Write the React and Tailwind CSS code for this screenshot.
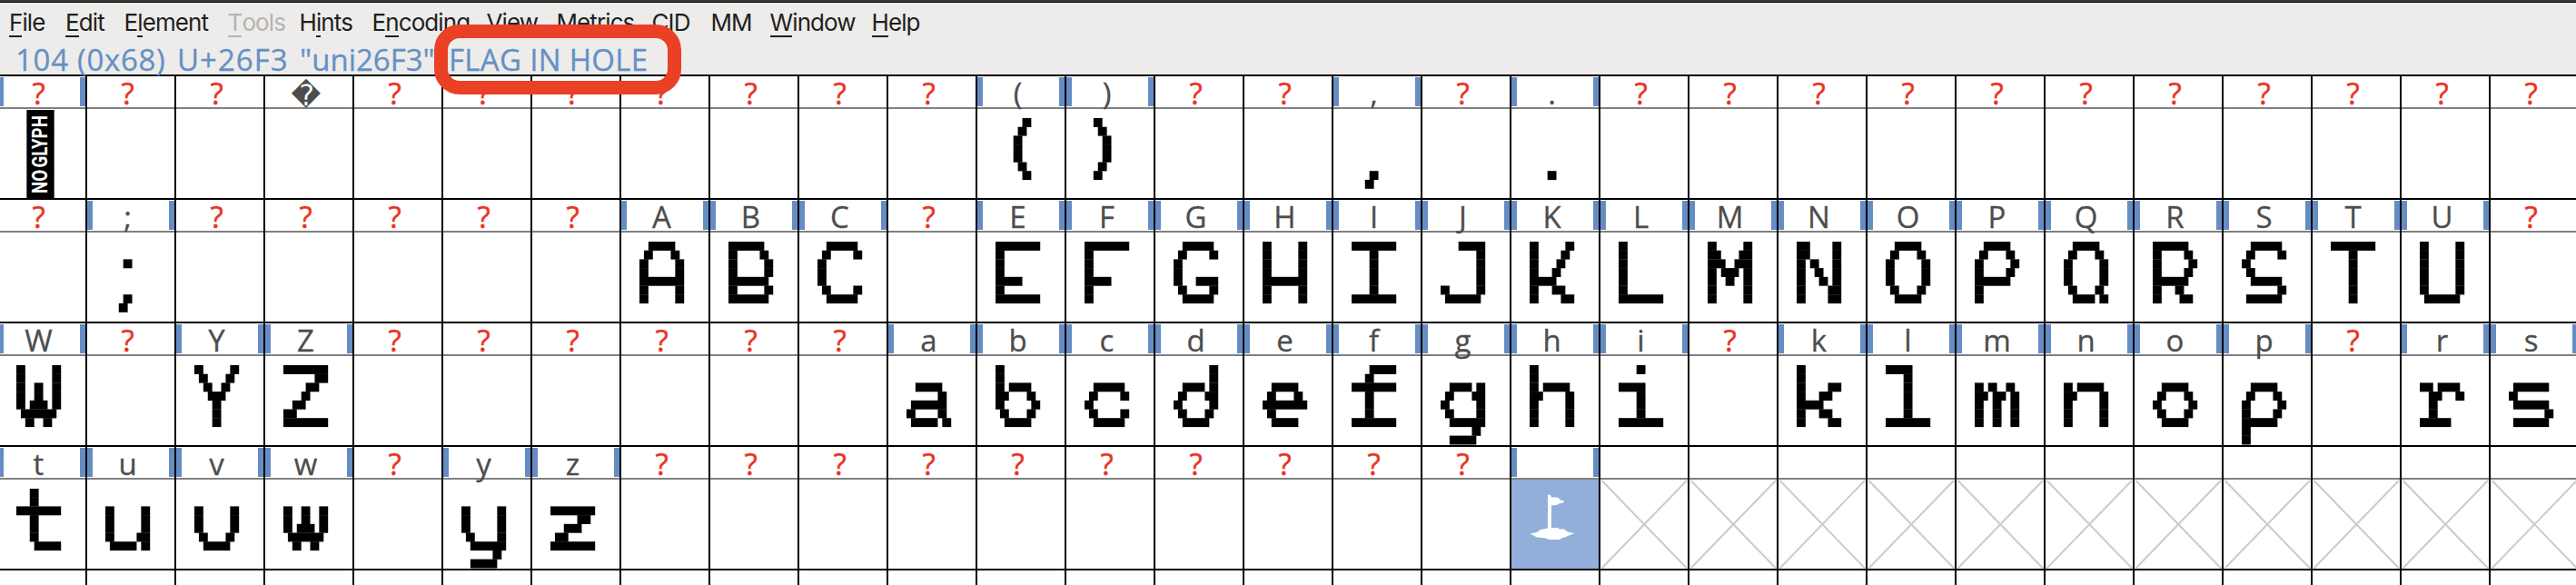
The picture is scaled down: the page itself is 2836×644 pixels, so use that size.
import React from "react";

const MENU = [
  { text: "File", w: "w-[62px]", key: 0 },
  { text: "Edit", w: "w-[64.5px]", key: 0 },
  { text: "Element", w: "w-[114px]", key: 1 },
  { text: "Tools", w: "w-[79px]", key: 0, off: true },
  { text: "Hints", w: "w-[80px]", key: 1 },
  { text: "Encoding", w: "w-[126px]", key: 1 },
  { text: "View", w: "w-[77px]", key: 0 },
  { text: "Metrics", w: "w-[105px]", key: 0 },
  { text: "CID", w: "w-[65px]", key: -1 },
  { text: "MM", w: "w-[65px]", key: -1 },
  { text: "Window", w: "w-[112px]", key: 0 },
  { text: "Help", w: "w-[80px]", key: 0 },
];

// Bitmaps: nine rows separated by "/", each a list of half-pixel runs
// (start and end column, "A" is column ten).
const BITMAPS = {
  "(": "68/57/46/46/46/57/68",
  ")": "24/35/46/46/46/35/24",
  ",": "//////46/35",
  ".": "//////46",
  ";": "//46////46/35",
  A: "28/13 79/02 8A/02 8A/0A/02 8A/02 8A",
  B: "08/02 79/02 8A/02 8A/09/02 8A/09",
  C: "29/13 8A/02/02/02/13 8A/29",
  E: "0A/02/02/02/06/02/0A",
  F: "0A/02/02/02/06/02/02",
  G: "29/13 8A/02/02/02 5A/13 8A/29",
  H: "02 8A/02 8A/02 8A/02 8A/0A/02 8A/02 8A",
  I: "0A/46/46/46/46/46/0A",
  J: "4A/8A/8A/8A/8A/02 8A/19",
  K: "02 8A/02 79/02 68/02 57/06/02 58/02 7A",
  L: "02/02/02/02/02/02/0A",
  M: "02 8A/03 7A/04 6A/02 37 8A/02 46 8A/02 8A/02 8A",
  N: "03 8A/03 8A/02 35 8A/02 46 8A/02 57 8A/02 7A/02 7A",
  O: "28/13 79/02 8A/02 8A/02 8A/13 79/28",
  P: "28/13 79/02 8A/02 79/08/02/02",
  Q: "28/13 79/02 8A/02 8A/02 8A/13 79/27 8A",
  R: "08/02 79/02 8A/02 79/08/02 57/02 69",
  S: "29/13 8A/02/13/29/8A/19",
  T: "0A/46/46/46/46/46/46",
  U: "02 8A/02 8A/02 8A/02 8A/02 8A/02 8A/19",
  W: "02 8A/02 8A/02 46 8A/02 46 8A/02 37 8A/19/24 68",
  Y: "02 8A/13 79/24 68/37/46/46/46",
  Z: "0A/7A/58/46/25/03/0A",
  a: "//28/79/19/02 79/17 8A",
  b: "02/02/02 38/03 79/02 8A/13 79/28",
  c: "//29/13 8A/02/13 8A/29",
  d: "8A/8A/27 8A/13 7A/02 8A/13 79/28",
  e: "//28/13 79/0A/13/28",
  f: "4A/35/0A/35/35/35/0A",
  g: "//27 8A/13 7A/02 8A/13 8A/2A/79/28",
  h: "02/02/02 39/03 8A/02 8A/02 8A/02 8A",
  i: "46//06/46/46/46/0A",
  k: "02/02/02 7A/02 58/06/02 58/02 7A",
  l: "06/46/46/46/46/46/0A",
  m: "//02 35 79/03 47 8A/02 46 8A/02 46 8A/02 46 8A",
  n: "//02 39/03 8A/02 8A/02 8A/02 8A",
  o: "//28/13 79/02 8A/13 79/28",
  p: "//28/13 79/02 8A/02 79/08/02/02",
  r: "//03 49/25 8A/24/24/07",
  s: "//19/02/19/8A/19",
  t: "35/35/0A/35/35/35/4A",
  u: "//02 8A/02 8A/02 8A/02 7A/17 8A",
  v: "//02 8A/02 8A/02 8A/13 79/28",
  w: "//02 46 8A/02 46 8A/02 37 8A/19/24 68",
  y: "//02 8A/02 8A/02 8A/13 8A/2A/79/28",
  z: "//0A/69/37/14/0A",
};

const ROWS = [
  "!??\uFFFD???????()??,?.???????????",
  "?;?????ABC?EFGHIJKLMNOPQRSTU?",
  "W?YZ??????abcdefghi?klmnop?rs",
  "tuvw?yz??????????#___________",
];

function Bitmap({ name }) {
  const rects = [];
  BITMAPS[name].split("/").forEach((row, y) => {
    row.split(" ").filter(Boolean).forEach((run) => {
      const a = parseInt(run[0], 16);
      const b = parseInt(run[1], 16);
      rects.push(
        <rect key={y + run} x={a * 4.92} y={y * 9.7} width={(b - a) * 4.92} height={9.9} />
      );
    });
  });
  return (
    <svg className="ml-[20.4px] mt-[10px] h-[88px] w-[50px] blur-[0.4px]" viewBox="0 0 50 88">
      {rects}
    </svg>
  );
}

function Flag() {
  return (
    <svg className="h-[98px] w-[96px] blur-[0.5px]" viewBox="0 0 96 98" fill="#fff">
      <path d="M40 16.5 L43 17 L44 19.5 L51 19.5 L54 22.5 L58 23.5 L57 25.5 L52 26.5 L50 28 L44 28.5 L44 53 L51 53 L53 54.5 L58 54.5 L62 57.5 L69.5 59.3 L63 61.5 L59 63.5 L56 64 L53 66 L41 66 L38 64.5 L28 63.5 L20.5 59.5 L28 58 L32 55 L40 53.5 Z" />
    </svg>
  );
}

function Cross() {
  return (
    <svg className="h-[98px] w-[96px]" viewBox="0 0 96 98" stroke="#cbcbcb" strokeWidth="2">
      <path d="M1.5 1 L95 97.500 M95 1 L1.5 97.500" />
    </svg>
  );
}

function Cell({ ch }) {
  const missing = ch === "?" || ch === "!";
  const barred = ch === "!" || ch === "#" || ch in BITMAPS;
  const label = missing ? "?" : ch === "#" || ch === "_" ? "" : ch;
  return (
    <div className="flex h-full w-[98px] shrink-0 flex-col border-r-2 border-black">
      <div className="flex h-9 items-start justify-between border-b-2 border-[#808080] pt-px">
        <span className={barred ? "h-8 w-1.5 bg-[#658dc3]" : "h-8 w-1.5"} />
        {ch === "\uFFFD" ? (
          <span className="h-8 -translate-x-[3px] font-['DejaVu_Sans'] text-[32px] leading-[40px] text-[#4d4d4d]">{label}</span>
        ) : (
          <span
            className={
              missing
                ? "h-8 -translate-x-[3.5px] font-['Open_Sans'] text-[33px] font-medium leading-[35px] text-[#ea3323] [-webkit-text-stroke:0.5px]"
                : "h-8 -translate-x-[3.5px] font-['Open_Sans'] text-[33px] font-medium leading-[35px] text-[#4d4d4d] [-webkit-text-stroke:0.3px]"
            }
          >
            {label}
          </span>
        )}
        <span className={barred ? "h-8 w-1.5 bg-[#658dc3]" : "h-8 w-1.5"} />
      </div>
      <div className={ch === "#" ? "h-[98px] overflow-hidden bg-[#91afda]" : "h-[98px] overflow-hidden"}>
        {ch in BITMAPS && <Bitmap name={ch} />}
        {ch === "#" && <Flag />}
        {ch === "_" && <Cross />}
        {ch === "!" && (
          <div className="ml-[30.500px] mt-px flex h-[97px] w-[31px] items-center justify-center border-x border-[#555] bg-black">
            <span className="-rotate-90 scale-x-[0.78] whitespace-nowrap font-['Roboto'] text-[24px] font-bold leading-none text-white [word-spacing:-3px]">
              NO GLYPH
            </span>
          </div>
        )}
      </div>
    </div>
  );
}

function MenuItem({ item }) {
  const { text, w, key, off } = item;
  return (
    <span className={`${w} ${off ? "text-[#b5b4b2]" : "text-[#1f1f1f]"} shrink-0 whitespace-nowrap`}>
      {key < 0 ? (
        text
      ) : (
        <>
          {text.slice(0, key)}
          <span className="inline-block h-[30px] border-b-2 border-current leading-[28px]">{text[key]}</span>
          {text.slice(key + 1)}
        </>
      )}
    </span>
  );
}

export default function App() {
  return (
    <div className="relative h-[644px] w-[2836px] overflow-hidden bg-white">
      <header className="flex h-[84px] flex-col border-b-2 border-black bg-[#edecea]">
        <div className="h-[3px] shrink-0 border-b border-black bg-[#3a3a3a]" />
        <nav className="flex h-[43px] shrink-0 items-start pl-[10px] pt-2 font-['Inter'] text-[26px] leading-[28px] tracking-[-0.9px]">
          {MENU.map((item) => (
            <MenuItem key={item.text} item={item} />
          ))}
        </nav>
        <div className="flex h-9 shrink-0 whitespace-pre pl-[17px] font-['Open_Sans'] text-[33px] font-medium leading-[40px] text-[#6690c6] [-webkit-text-stroke:0.3px]">
          <span className="w-[178px] shrink-0 tracking-[0.7px]">104 (0x68) </span>
          <span className="w-[135px] shrink-0 tracking-[1px]">U+26F3 </span>
          <span className="w-[164px] shrink-0">"uni26F3" </span>
          <span className="tracking-[0.3px]">FLAG IN HOLE</span>
        </div>
      </header>
      <main>
        {ROWS.map((row) => (
          <div key={row} className="-ml-0.5 flex h-[136px] border-b-2 border-black">
            {[...row].map((ch, i) => (
              <Cell key={i} ch={ch} />
            ))}
          </div>
        ))}
        <div className="-ml-0.5 flex h-4">
          {[...ROWS[0]].map((_, i) => (
            <div key={i} className="w-[98px] shrink-0 border-r-2 border-black" />
          ))}
        </div>
      </main>
      <div className="absolute left-[478px] top-[27px] h-[77px] w-[272px] rounded-[28px] border-[15px] border-[#ea4025]" />
    </div>
  );
}
